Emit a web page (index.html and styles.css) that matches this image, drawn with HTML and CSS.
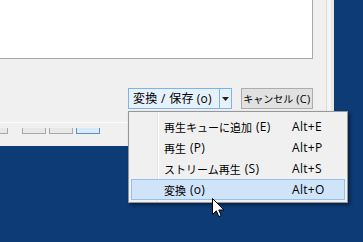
FILE: index.html
```html
<!DOCTYPE html>
<html lang="ja">
<head>
<meta charset="utf-8">
<link rel="stylesheet" href="styles.css">
</head>
<body>
<div class="dialog">
  <div class="list"></div>
  <div class="buttons">
    <div class="split">
      <span class="split-main">変換 / 保存 <span class="mn">(o)</span></span>
      <span class="split-arrow"><svg width="7" height="4" viewBox="0 0 7 4"><path d="M0 0h7L3.5 4z" fill="#222"/></svg></span>
    </div>
    <div class="btn">キャンセル <span class="mn">(C)</span></div>
  </div>
  <div class="footer">
    <div class="tabs">
      <span class="tab t0"></span>
      <span class="tab t1"></span>
      <span class="tab t2"></span>
      <span class="tab t3 active"></span>
    </div>
  </div>
</div>
<div class="menu">
  <div class="item"><span class="label">再生キューに追加 <span class="mn">(E)</span></span><span class="key">Alt+E</span></div>
  <div class="item"><span class="label">再生 <span class="mn">(P)</span></span><span class="key">Alt+P</span></div>
  <div class="item"><span class="label">ストリーム再生 <span class="mn">(S)</span></span><span class="key">Alt+S</span></div>
  <div class="item hot"><span class="label">変換 <span class="mn">(o)</span></span><span class="key">Alt+O</span></div>
</div>
<svg class="cursor" width="13" height="20" viewBox="0 0 13 20">
  <path d="M0.5 0.5V16.5L4.3 12.8L6.8 18.6L9.2 17.6L6.8 12H11.9Z" fill="#fff" stroke="#000" stroke-width="1" stroke-linejoin="miter"/>
</svg>
</body>
</html>
```
FILE: styles.css
```css
html, body {
  margin: 0;
  padding: 0;
}
body {
  width: 363px;
  height: 242px;
  background: #0c3b76;
  position: relative;
  overflow: hidden;
  font-family: "Open Sans", "Noto Sans CJK JP", sans-serif;
  font-size: 11px;
  color: #000;
}
.mn {
  font-family: "Open Sans", sans-serif;
  font-size: 12px;
  letter-spacing: 0.3px;
}
.dialog {
  width: 326px;
  height: 146px;
  background: #f0f0f0;
  border-right: 1px solid #dcdcdc;
  box-shadow: 4px 0 0 #f4f4f4, 7px 0 0 #e6e6e6;
  display: flex;
  flex-direction: column;
}
.list {
  width: 312px;
  height: 58px;
  background: #fff;
  border-right: 1px solid #a9a9a9;
  border-bottom: 1px solid #a9a9a9;
  flex: none;
}
.buttons {
  display: flex;
  justify-content: flex-end;
  gap: 9px;
  margin-top: 29px;
  padding-right: 13px;
  height: 21px;
}
.split {
  display: flex;
  width: 104px;
  height: 21px;
  box-sizing: border-box;
  border: 1px solid #7eb4ea;
  background: #e5f1fb;
}
.split-main {
  flex: 1;
  display: flex;
  align-items: center;
  gap: 3px;
  padding-left: 4px;
  line-height: 1;
  font-size: 12px;
  letter-spacing: 0.3px;
  white-space: nowrap;
}
.split-arrow {
  width: 11px;
  border-left: 1px solid #7eb4ea;
  display: flex;
  align-items: center;
  justify-content: center;
}
.btn {
  width: 72px;
  height: 21px;
  box-sizing: border-box;
  border: 1px solid #adadad;
  background: #e1e1e1;
  display: flex;
  align-items: center;
  justify-content: center;
  gap: 3px;
  font-size: 10px;
  white-space: nowrap;
  line-height: 1;
}
.btn .mn {
  font-size: 11px;
}
.footer {
  flex: 1;
  margin-top: 13px;
  border-top: 1px solid #fbfbfb;
  position: relative;
}
.tabs {
  display: flex;
  margin-top: 5px;
  height: 6px;
}
.tab {
  height: 5px;
  border: 1px solid #a8a8a8;
  border-top: none;
  background: #e8e8e8;
}
.t0 { width: 7px; margin-left: -1px; }
.t1 { width: 22px; margin-left: 14px; }
.t2 { width: 22px; margin-left: 3px; }
.t3 { width: 22px; margin-left: 3px; }
.tab.active {
  border-color: #5b8fd0;
  background: #d8eafc;
}
.menu {
  position: absolute;
  left: 128px;
  top: 111px;
  width: 220px;
  box-sizing: border-box;
  border: 1px solid #979797;
  background: #f0f0f0;
  padding: 4px 2px 2px;
  box-shadow: 2px 2px 3px rgba(0, 0, 0, 0.45);
  background-image: linear-gradient(to right, transparent 28px, #e2e3e3 28px, #e2e3e3 29px, #fff 29px, #fff 30px, transparent 30px);
}
.item {
  display: flex;
  align-items: center;
  height: 21px;
  box-sizing: border-box;
  border: 1px solid transparent;
  font-size: 11px;
  white-space: nowrap;
}
.label {
  flex: 1;
  display: flex;
  align-items: center;
  gap: 4px;
  padding-left: 32px;
}
.key {
  width: 52px;
  font-size: 12px;
  letter-spacing: 0.3px;
}
.item.hot {
  background: #cfe4f8;
  border-color: #94c0ea;
}
.cursor {
  position: absolute;
  left: 212px;
  top: 198px;
}
```
